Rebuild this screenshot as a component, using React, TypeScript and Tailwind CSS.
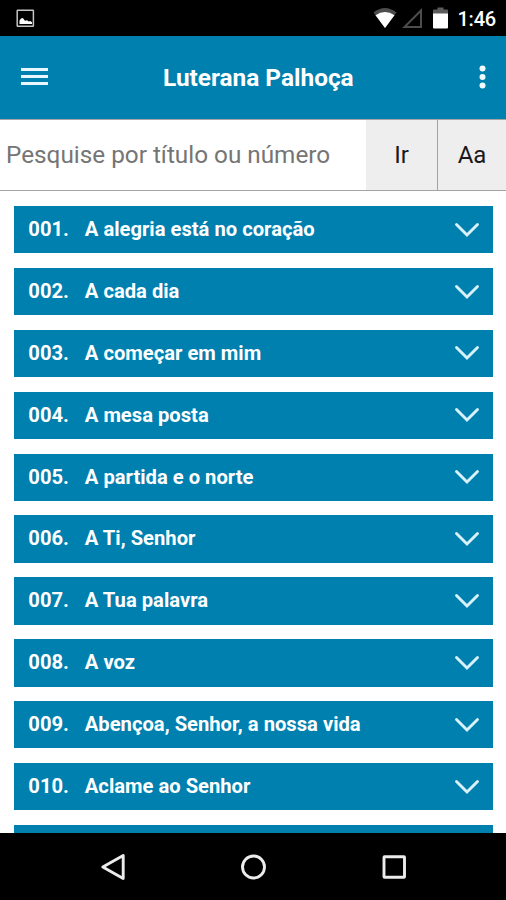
import React, { useState } from 'react';

interface Hymn {
  number: string;
  title: string;
}

const HYMNS: Hymn[] = [
  { number: '001.', title: 'A alegria está no coração' },
  { number: '002.', title: 'A cada dia' },
  { number: '003.', title: 'A começar em mim' },
  { number: '004.', title: 'A mesa posta' },
  { number: '005.', title: 'A partida e o norte' },
  { number: '006.', title: 'A Ti, Senhor' },
  { number: '007.', title: 'A Tua palavra' },
  { number: '008.', title: 'A voz' },
  { number: '009.', title: 'Abençoa, Senhor, a nossa vida' },
  { number: '010.', title: 'Aclame ao Senhor' },
];

const StatusBar: React.FC = () => (
  <div className="flex h-9 shrink-0 items-center bg-black pr-[10px] pl-4">
    {/* Screenshot notification */}
    <svg className="h-[19px] w-[19px]" viewBox="0 0 19 19" fill="none">
      <rect x="1.2" y="1.2" width="16.2" height="16" rx="0.5" stroke="#c4c4c4" strokeWidth="1.5" />
      <path d="M3.500 15v-3.500L5 9.500l1.800-.4 2.200 2.600 2-.4 1.800 1.200 1.500-.5 1.700 1.200V15z" fill="#fff" />
    </svg>

    <div className="ml-auto flex items-center">
      {/* Wifi */}
      <svg className="h-[22px] w-6" viewBox="0 0 24 22">
        <path d="M.5 5.5Q12-3.5 23.5 5.5L12 21z" fill="#4d4d4d" />
        <path d="M2.5 8.2Q12 2 21.5 8.2L12 21z" fill="#fff" />
      </svg>
      {/* Signal */}
      <svg className="ml-[5px] h-[21px] w-[21px]" viewBox="0 0 21 21" fill="none">
        <path d="M19 2.500V19H2.500z" stroke="#4d4d4d" strokeWidth="2" />
      </svg>
      {/* Battery */}
      <svg className="ml-2.5 h-[22px] w-[15px]" viewBox="0 0 15 22">
        <path d="M4.500 0.500h6v2H14a1 1 0 0 1 1 1v4H0V3.500a1 1 0 0 1 1-1h3.500z" fill="#5c5c5c" />
        <path d="M0 6.500h15V20.500a1 1 0 0 1-1 1H1a1 1 0 0 1-1-1z" fill="#fff" />
      </svg>
      <span className="ml-[9px] pt-0.5 text-[20px] leading-9 font-medium tracking-[-0.2px] text-white">1:46</span>
    </div>
  </div>
);

const AppHeader: React.FC = () => (
  <header className="flex h-[83px] shrink-0 items-center bg-[#0080af] pr-[17px] pl-[21px] text-white">
    <button aria-label="Menu" className="flex w-[27px] flex-col gap-[3.5px] pb-0.5">
      <span className="h-[3.5px] bg-[#e9f8ff]" />
      <span className="h-[3.5px] bg-[#e9f8ff]" />
      <span className="h-[3.5px] bg-[#e9f8ff]" />
    </button>
    <h1 className="ml-[115px] pt-0.5 text-[24.4px] font-bold">Luterana Palhoça</h1>
    <button aria-label="Mais opções" className="ml-auto pb-0.5">
      <svg className="h-6 w-[13px]" viewBox="0 0 13 24" fill="#f2fbff">
        <circle cx="6.500" cy="3.400" r="3" />
        <circle cx="6.500" cy="12" r="3" />
        <circle cx="6.500" cy="20.600" r="3" />
      </svg>
    </button>
  </header>
);

const SearchBar: React.FC = () => {
  const [query, setQuery] = useState('');

  return (
    <div className="flex h-[72px] shrink-0 border-t border-b border-[#a3a3a3] text-2xl">
      <input
        value={query}
        onChange={(e) => setQuery(e.target.value)}
        placeholder="Pesquise por título ou número"
        className="w-[366px] pl-1.5 text-[24.3px] outline-none placeholder:text-[#757575]"
      />
      <button className="w-[71px] bg-[#eee] text-[#1a1a1a]">Ir</button>
      <button className="flex-1 border-l border-[#a3a3a3] bg-[#eee] text-[#1a1a1a]">Aa</button>
    </div>
  );
};

const HymnRow: React.FC<{ hymn: Hymn }> = ({ hymn }) => (
  <li className="flex h-[47.3px] shrink-0 items-center bg-[#0080af] pr-[12.5px] pl-3.5 text-[20.2px] font-bold text-white">
    <span className="w-[56.5px] pb-px">{hymn.number}</span>
    <span className="flex-1 pb-px">{hymn.title}</span>
    <svg className="h-4 w-[26px]" viewBox="0 0 26 16" fill="none">
      <path d="M2.500 2.500L13 13 23.500 2.500" stroke="#d9f1fb" strokeWidth="2.900" strokeLinecap="round" />
    </svg>
  </li>
);

const NavBar: React.FC = () => (
  <nav className="flex h-[67px] shrink-0 items-center bg-black pl-[100px]">
    <svg className="h-7 w-[320px]" viewBox="0 0 320 28" fill="none" stroke="#ececec" strokeWidth="2.900" strokeLinejoin="round">
      <path d="M2.800 14L23.200 2.500V25.500z" />
      <circle cx="153.500" cy="14" r="11" />
      <rect x="284" y="3.800" width="20.500" height="20.500" rx="0.500" />
    </svg>
  </nav>
);

export default function App() {
  return (
    <div className="flex h-[900px] w-[506px] flex-col overflow-hidden bg-white font-['Roboto',sans-serif]">
      <StatusBar />
      <AppHeader />
      <SearchBar />
      <ul className="flex min-h-0 flex-1 flex-col gap-[14.6px] overflow-hidden pt-[15px] pr-[13.4px] pl-[14.3px]">
        {HYMNS.map((hymn) => (
          <HymnRow key={hymn.number} hymn={hymn} />
        ))}
        {/* Next row, cut off by the navigation bar */}
        <li className="h-[47.3px] shrink-0 bg-[#0080af]" />
      </ul>
      <NavBar />
    </div>
  );
}
